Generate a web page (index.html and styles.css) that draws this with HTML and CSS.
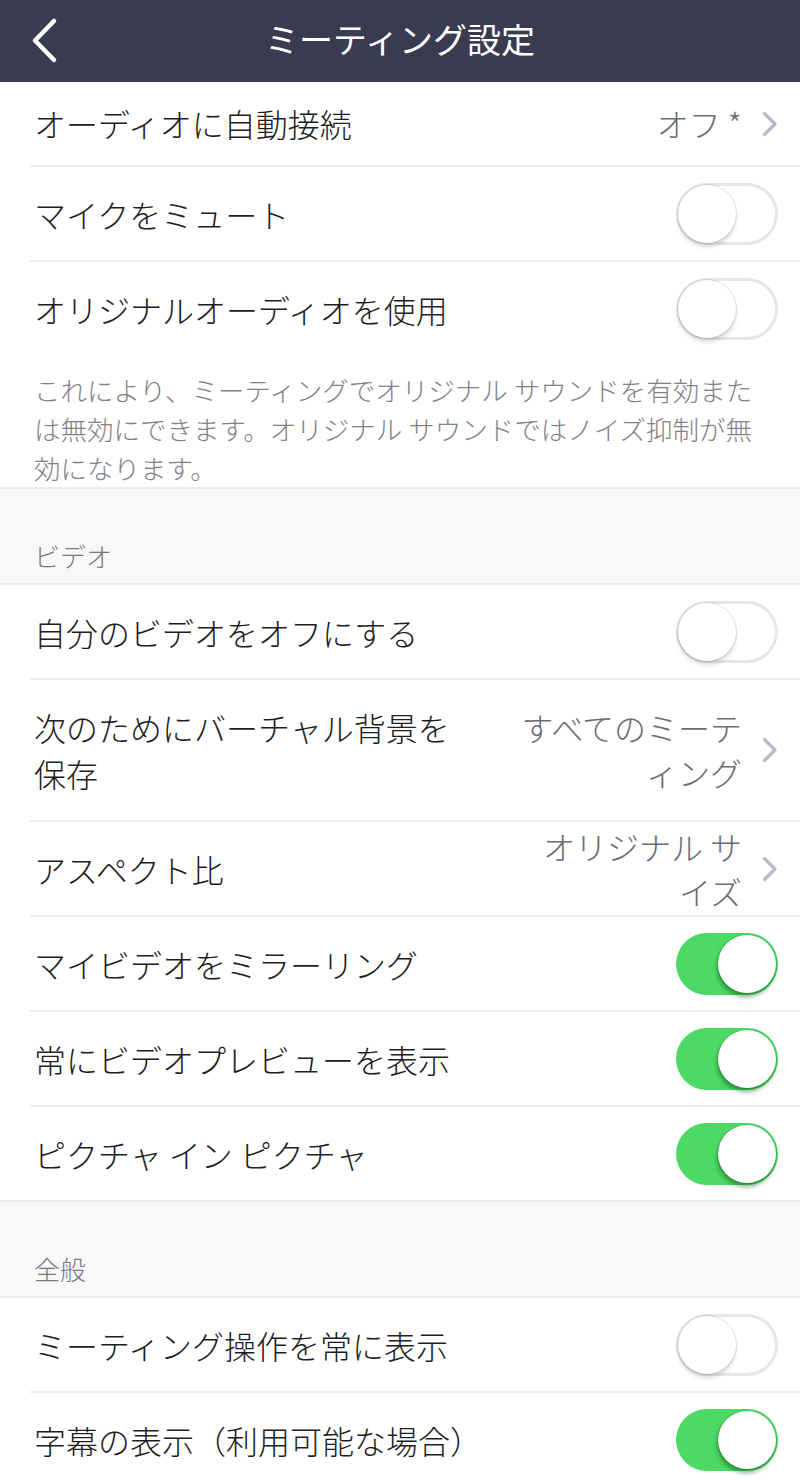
FILE: index.html
```html
<!DOCTYPE html>
<html lang="ja">
<head>
<meta charset="utf-8">
<title>ミーティング設定</title>
<link rel="stylesheet" href="styles.css">
</head>
<body>
<header class="topbar">
  <svg class="back" width="30" height="48" viewBox="0 0 30 48"><polyline points="24,5 5,24.5 24,44" fill="none" stroke="#fff" stroke-width="4.5" stroke-linecap="round" stroke-linejoin="round"/></svg>
  <h1 class="title">ミーティング設定</h1>
  <span class="spacer"></span>
</header>

<section class="group">
  <div class="row row-first">
    <span class="label">オーディオに自動接続</span>
    <span class="value">オフ *</span>
    <svg class="chev" width="16" height="26" viewBox="0 0 16 26"><polyline points="2.5,2.5 13,13 2.5,23.5" fill="none" stroke="#bab8cc" stroke-width="3.2" stroke-linecap="round" stroke-linejoin="round"/></svg>
  </div>
  <div class="row">
    <span class="label">マイクをミュート</span>
    <span class="toggle"><span class="knob"></span></span>
  </div>
  <div class="row row-plain">
    <span class="label">オリジナルオーディオを使用</span>
    <span class="toggle"><span class="knob"></span></span>
  </div>
  <p class="desc">これにより、ミーティングでオリジナル サウンドを有効または無効にできます。オリジナル サウンドではノイズ抑制が無効になります。</p>
</section>

<div class="section-head"><span>ビデオ</span></div>

<section class="group">
  <div class="row">
    <span class="label">自分のビデオをオフにする</span>
    <span class="toggle"><span class="knob"></span></span>
  </div>
  <div class="row">
    <span class="label label-narrow label-two">次のためにバーチャル背景を保存</span>
    <span class="value value-wrap">すべてのミーティング</span>
    <svg class="chev" width="16" height="26" viewBox="0 0 16 26"><polyline points="2.5,2.5 13,13 2.5,23.5" fill="none" stroke="#bab8cc" stroke-width="3.2" stroke-linecap="round" stroke-linejoin="round"/></svg>
  </div>
  <div class="row">
    <span class="label label-narrow">アスペクト比</span>
    <span class="value value-wrap">オリジナル サイズ</span>
    <svg class="chev" width="16" height="26" viewBox="0 0 16 26"><polyline points="2.5,2.5 13,13 2.5,23.5" fill="none" stroke="#bab8cc" stroke-width="3.2" stroke-linecap="round" stroke-linejoin="round"/></svg>
  </div>
  <div class="row">
    <span class="label">マイビデオをミラーリング</span>
    <span class="toggle on"><span class="knob"></span></span>
  </div>
  <div class="row">
    <span class="label">常にビデオプレビューを表示</span>
    <span class="toggle on"><span class="knob"></span></span>
  </div>
  <div class="row row-plain">
    <span class="label">ピクチャ イン ピクチャ</span>
    <span class="toggle on"><span class="knob"></span></span>
  </div>
</section>

<div class="section-head"><span>全般</span></div>

<section class="group">
  <div class="row">
    <span class="label">ミーティング操作を常に表示</span>
    <span class="toggle"><span class="knob"></span></span>
  </div>
  <div class="row row-plain">
    <span class="label">字幕の表示（利用可能な場合）</span>
    <span class="toggle on"><span class="knob"></span></span>
  </div>
</section>
</body>
</html>
```

FILE: styles.css
```css
html, body {
  margin: 0;
  padding: 0;
}
body {
  width: 800px;
  background: #f8f8f9;
  font-family: "Noto Sans CJK JP", "Noto Sans", sans-serif;
  font-weight: 300;
  color: #1d1d22;
  -webkit-font-smoothing: antialiased;
}

.topbar {
  height: 82px;
  background: #3a3b50;
  display: flex;
  align-items: center;
  padding: 0 30px;
  box-sizing: border-box;
}
.back {
  display: block;
  flex: 0 0 30px;
  margin-top: -2px;
}
.spacer {
  flex: 0 0 30px;
}
.title {
  flex: 1;
  margin: 0;
  text-align: center;
  color: #ffffff;
  font-size: 34px;
  font-weight: 400;
  line-height: 40px;
  margin-top: -4px;
}

.group {
  background: #ffffff;
  border-bottom: 2px solid #ececf1;
}

.row {
  margin-left: 30px;
  padding: 0 22px 0 4px;
  min-height: 93px;
  display: flex;
  align-items: center;
  border-bottom: 2px solid #ececf1;
}
.row-first {
  min-height: 83px;
}
.row-first .label {
  padding: 18px 0 19px;
}
.row-plain {
  border-bottom: none;
}

.label {
  flex: 1;
  font-size: 32px;
  line-height: 46px;
  padding: 24px 0 23px;
}
.label-narrow {
  flex: 0 0 440px;
  margin-right: auto;
}
.label-two {
  padding: 24px 0 24px;
}

.value {
  font-size: 32px;
  line-height: 45px;
  color: #6c6c72;
  text-align: right;
  margin-right: 20px;
}
.value-wrap {
  width: 228px;
  flex: 0 0 228px;
}

.chev {
  display: block;
  flex: 0 0 16px;
}

.toggle {
  flex: 0 0 auto;
  width: 102px;
  height: 62px;
  box-sizing: border-box;
  border-radius: 31px;
  background: #ffffff;
  box-shadow: inset 0 0 0 3px #e6e6e9;
  display: flex;
  align-items: center;
  justify-content: flex-start;
  padding: 2px;
}
.knob {
  width: 58px;
  height: 58px;
  border-radius: 50%;
  background: #ffffff;
  box-shadow: 0 0 0 1px rgba(0, 0, 0, 0.09), 0 4px 4px rgba(0, 0, 0, 0.14);
}
.toggle.on {
  background: #4cd964;
  box-shadow: none;
  justify-content: flex-end;
}
.toggle.on .knob {
  box-shadow: 0 0 0 1px rgba(0, 60, 0, 0.12), -1px 4px 4px rgba(0, 70, 10, 0.45);
}

.desc {
  margin: 0;
  padding: 15px 34px 0 34px;
  font-size: 26.5px;
  line-height: 39px;
  color: #818187;
}

.section-head {
  height: 96px;
  box-sizing: border-box;
  display: flex;
  align-items: flex-end;
  padding: 0 0 9px 34px;
  font-size: 26px;
  line-height: 36px;
  color: #78787e;
  border-bottom: 2px solid #ececf1;
}
```
